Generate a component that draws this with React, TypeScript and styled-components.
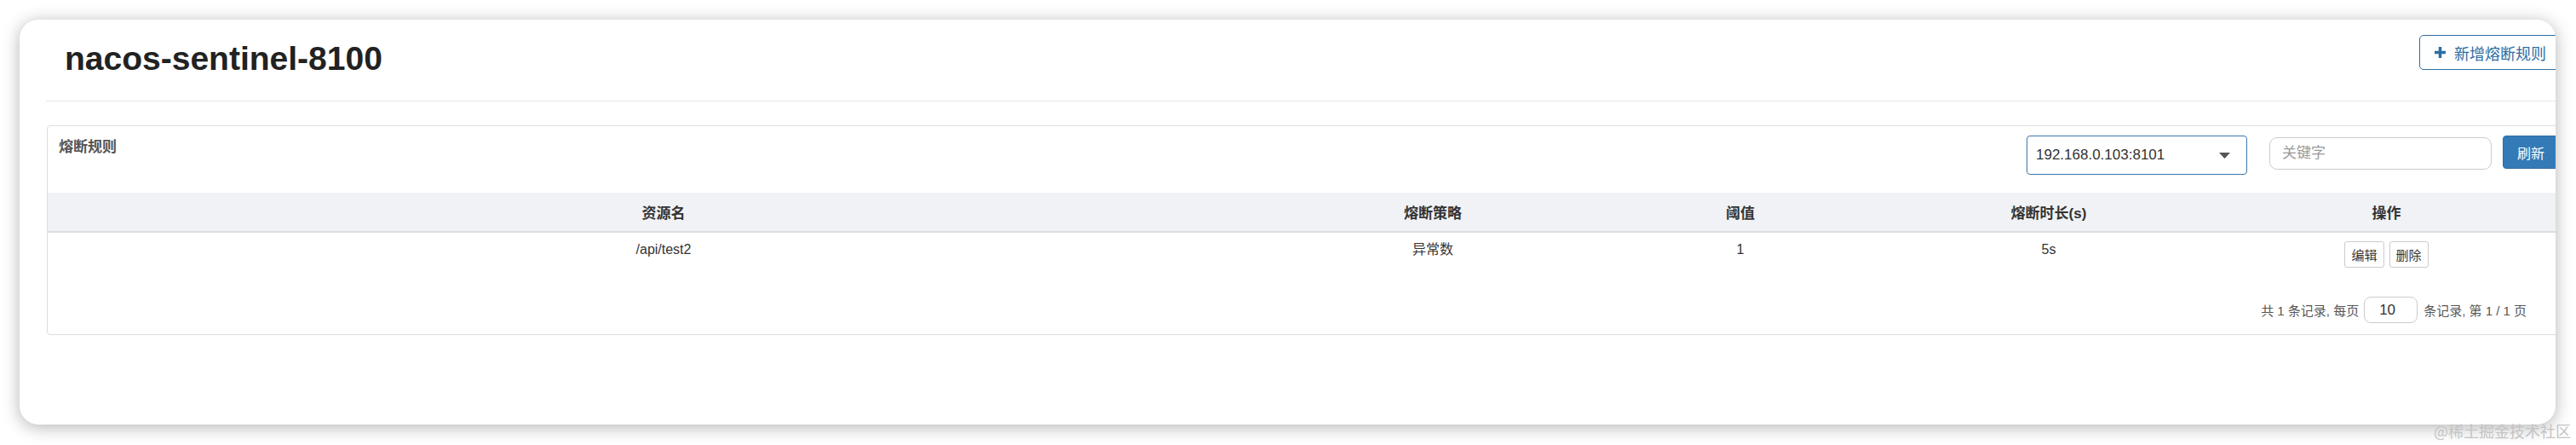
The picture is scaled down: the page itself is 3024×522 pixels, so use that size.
import React from "react";
import styled, { createGlobalStyle } from "styled-components";

const GlobalStyle = createGlobalStyle`
  html, body {
    margin: 0;
    padding: 0;
    background: #ffffff;
  }
  body {
    font-family: "Liberation Sans", "Noto Sans CJK SC", sans-serif;
    color: #333;
  }
  * { box-sizing: border-box; }
`;

const FONT = `"Liberation Sans", "Noto Sans CJK SC", sans-serif`;

const Page = styled.div`
  position: relative;
  width: 3024px;
  height: 522px;
  padding: 23px 24px 24px 23px;
  overflow: hidden;
`;

const Window = styled.div`
  height: 475px;
  background: #fff;
  border-radius: 22px;
  box-shadow: 0 3px 20px rgba(0, 0, 0, 0.3);
  overflow: hidden;
  padding-left: 31px;
`;

const Content = styled.div`
  width: 2963px;
`;

const Header = styled.div`
  display: flex;
  justify-content: space-between;
  align-items: flex-start;
  height: 96px;
  padding: 18px 10px 0 22px;
  border-bottom: 1px solid #e5e5e5;
`;

const Title = styled.h1`
  margin: 8px 0 0;
  font-family: ${FONT};
  font-weight: 700;
  font-size: 39px;
  line-height: 39px;
  color: #222;
`;

const AddButton = styled.button`
  display: flex;
  align-items: center;
  gap: 10px;
  height: 41px;
  padding: 0 17px;
  border: 1px solid #2e6da4;
  border-radius: 5px;
  background: #fff;
  color: #2e6da4;
  font-family: ${FONT};
  font-size: 18px;
`;

const Panel = styled.div`
  margin: 28px 0 0 1px;
  border: 1px solid #dddddd;
  border-radius: 4px;
`;

const PanelHeading = styled.div`
  display: flex;
  align-items: flex-start;
  height: 78px;
  padding: 11px 12px 0 13px;
`;

const PanelTitle = styled.div`
  flex: 1;
  margin-top: 4px;
  font-family: ${FONT};
  font-weight: 700;
  font-size: 17px;
  line-height: 20px;
  color: #555;
`;

const SelectBox = styled.div`
  display: flex;
  align-items: center;
  justify-content: space-between;
  width: 259px;
  height: 46px;
  padding: 0 19px 0 10px;
  border: 1px solid #3d75ae;
  border-radius: 4px;
  font-family: ${FONT};
  font-size: 17px;
  color: #333;
`;

const SearchInput = styled.input`
  width: 261px;
  height: 38px;
  margin: 2px 0 0 26px;
  padding: 0 14px;
  border: 1px solid #cccccc;
  border-radius: 9px;
  font-family: ${FONT};
  font-size: 17px;
  color: #333;
  outline: none;
  &::placeholder {
    color: #999;
  }
`;

const PrimaryButton = styled.button`
  height: 39px;
  margin-left: 13px;
  padding: 0 16px;
  border: 1px solid #2e6da4;
  border-radius: 4px;
  background: #337ab7;
  color: #fff;
  font-family: ${FONT};
  font-size: 16px;
`;

const Table = styled.table`
  width: 2961px;
  border-collapse: collapse;
  table-layout: fixed;
`;

const Th = styled.th<{ $w: number }>`
  width: ${(p) => p.$w}px;
  height: 46px;
  padding: 0;
  background: #f0f2f5;
  border-bottom: 2px solid #dddddd;
  font-family: ${FONT};
  font-weight: 700;
  font-size: 17px;
  color: #333;
  text-align: center;
  vertical-align: middle;
`;

const Td = styled.td`
  padding: 8px 0 8px;
  text-align: center;
  vertical-align: top;
  font-family: ${FONT};
  font-size: 16px;
  line-height: 24px;
  color: #333;
`;

const ActionGroup = styled.div`
  display: flex;
  justify-content: center;
  gap: 6px;
  margin-top: 2px;
`;

const SmallButton = styled.button`
  height: 31px;
  padding: 0 7px;
  border: 1px solid #cccccc;
  border-radius: 3px;
  background: #fff;
  color: #333;
  font-family: ${FONT};
  font-size: 15px;
`;

const Pagination = styled.div`
  display: flex;
  justify-content: flex-end;
  align-items: center;
  margin: 26px 0 13px;
  padding-right: 50px;
  font-family: ${FONT};
  font-size: 15px;
  color: #555;
`;

const PageSizeInput = styled.div`
  width: 63px;
  height: 31px;
  margin: 0 7px 0 6px;
  padding-left: 17px;
  display: flex;
  align-items: center;
  border: 1px solid #cccccc;
  border-radius: 8px;
  font-size: 17px;
  color: #333;
`;

const Watermark = styled.div`
  position: absolute;
  right: 6px;
  top: 494px;
  font-family: "Noto Sans CJK SC", sans-serif;
  font-size: 18px;
  line-height: 22px;
  color: #c4c4c4;
`;

const PlusIcon = () => (
  <svg width="13" height="13" viewBox="0 0 13 13">
    <rect x="4.75" y="0" width="3.5" height="13" fill="#2e6da4" />
    <rect x="0" y="4.75" width="13" height="3.5" fill="#2e6da4" />
  </svg>
);

const Caret = () => (
  <svg width="13" height="7" viewBox="0 0 13 7">
    <polygon points="0,0 13,0 6.5,7" fill="#555" />
  </svg>
);

const columns = [
  { label: "资源名", w: 1446 },
  { label: "熔断策略", w: 360 },
  { label: "阈值", w: 362 },
  { label: "熔断时长(s)", w: 362 },
  { label: "操作", w: 431 },
];

export default function App() {
  return (
    <>
      <GlobalStyle />
      <Page>
        <Window>
          <Content>
            <Header>
              <Title>nacos-sentinel-8100</Title>
              <AddButton>
                <PlusIcon />
                新增熔断规则
              </AddButton>
            </Header>
            <Panel>
              <PanelHeading>
                <PanelTitle>熔断规则</PanelTitle>
                <SelectBox>
                  <span>192.168.0.103:8101</span>
                  <Caret />
                </SelectBox>
                <SearchInput placeholder="关键字" />
                <PrimaryButton>刷新</PrimaryButton>
              </PanelHeading>
              <Table>
                <thead>
                  <tr>
                    {columns.map((c) => (
                      <Th key={c.label} $w={c.w}>
                        {c.label}
                      </Th>
                    ))}
                  </tr>
                </thead>
                <tbody>
                  <tr>
                    <Td>/api/test2</Td>
                    <Td>异常数</Td>
                    <Td>1</Td>
                    <Td>5s</Td>
                    <Td>
                      <ActionGroup>
                        <SmallButton>编辑</SmallButton>
                        <SmallButton>删除</SmallButton>
                      </ActionGroup>
                    </Td>
                  </tr>
                </tbody>
              </Table>
              <Pagination>
                <span>共 1 条记录, 每页</span>
                <PageSizeInput>10</PageSizeInput>
                <span>条记录, 第 1 / 1 页</span>
              </Pagination>
            </Panel>
          </Content>
        </Window>
        <Watermark>@稀土掘金技术社区</Watermark>
      </Page>
    </>
  );
}
